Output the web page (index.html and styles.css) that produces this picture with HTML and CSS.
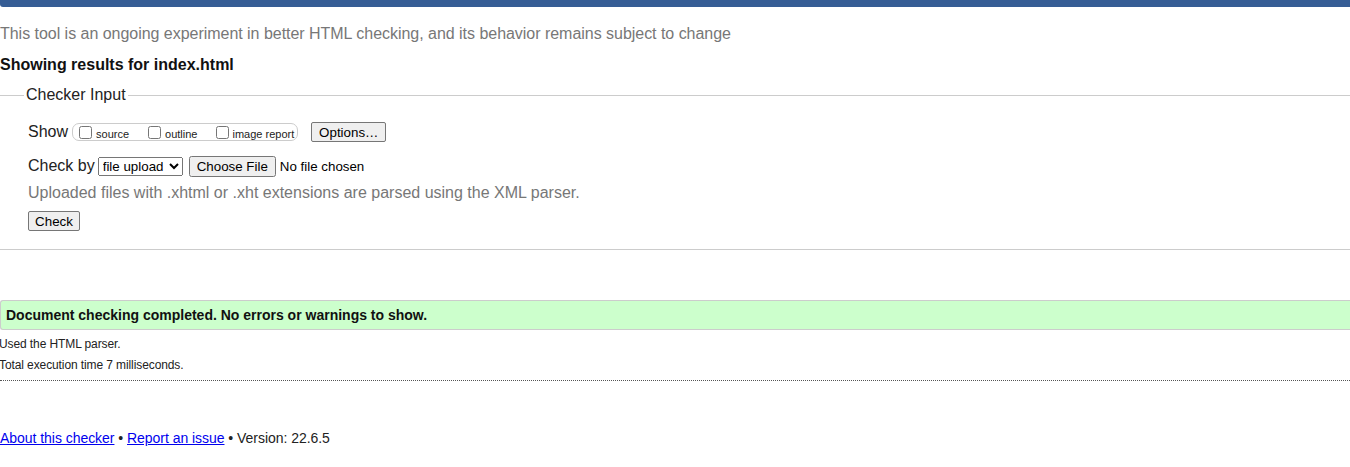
FILE: index.html
```html
<!DOCTYPE html>
<html lang="en">
<head>
<meta charset="utf-8">
<title>Nu Html Checker</title>
<link rel="stylesheet" href="styles.css">
</head>
<body>
<div class="topbar"></div>
<p class="intro">This tool is an ongoing experiment in better HTML checking, and its behavior remains subject to change</p>
<p class="results">Showing results for index.html</p>
<form class="panel">
  <div class="panel-head"><span class="legend">Checker Input</span></div>
  <div class="panel-body">
    <div class="row show-row">
      <span class="label">Show</span>
      <span class="opts">
        <label class="opt"><input type="checkbox"><span>source</span></label>
        <label class="opt"><input type="checkbox"><span>outline</span></label>
        <label class="opt last"><input type="checkbox"><span>image report</span></label>
      </span>
      <button type="button" class="btn options">Options…</button>
    </div>
    <div class="row check-row">
      <span class="label">Check by</span>
      <select class="sel"><option>file upload</option></select>
      <input type="file" class="file">
    </div>
    <p class="hint">Uploaded files with .xhtml or .xht extensions are parsed using the XML parser.</p>
    <button type="button" class="btn check">Check</button>
  </div>
</form>
<p class="success">Document checking completed. No errors or warnings to show.</p>
<p class="details first">Used the HTML parser.</p>
<p class="details second">Total execution time 7 milliseconds.</p>
<hr class="dots">
<p class="footer"><a href="#">About this checker</a> • <a href="#">Report an issue</a> • Version: 22.6.5</p>
</body>
</html>
```
FILE: styles.css
```css
html, body {
  margin: 0;
  background: #fff;
}
body {
  font-family: "Liberation Sans", Arial, sans-serif;
  color: #222;
  font-size: 16px;
}
.topbar {
  height: 7px;
  background: #365d95;
  border-bottom-left-radius: 3px;
}
.intro {
  margin: 17px 0 0;
  line-height: 20px;
  color: #777;
  letter-spacing: -0.03px;
}
.results {
  margin: 11px 0 0;
  line-height: 20px;
  font-weight: bold;
  color: #111;
}
.panel {
  margin: 11px 0 0;
  border-bottom: 1px solid #ccc;
  padding-bottom: 18px;
}
.panel-head {
  display: flex;
  align-items: center;
  height: 18px;
}
.panel-head::before,
.panel-head::after {
  content: "";
  height: 1px;
  background: #ccc;
}
.panel-head::before {
  width: 24px;
}
.panel-head::after {
  flex: 1;
}
.legend {
  padding: 0 2px;
  line-height: 18px;
  color: #222;
}
.panel-body {
  padding: 18px 0 0 28px;
}
.row {
  display: flex;
  align-items: center;
  height: 20px;
}
.label {
  line-height: 20px;
}
.opts {
  display: inline-flex;
  align-items: center;
  height: 16px;
  margin-left: 4px;
  padding: 0 3px 0 6px;
  border: 1px solid #ccc;
  border-radius: 7px;
}
.opt {
  display: inline-flex;
  align-items: center;
  font-size: 11px;
  margin-right: 19px;
}
.opt span {
  padding-top: 3px;
}
.opt.last {
  margin-right: 0;
}
.opt input {
  width: 13px;
  height: 13px;
  margin: 0 4px 0 0;
}
.opt.last input {
  margin-right: 3px;
}
.btn {
  font: 13.33px "Liberation Sans", Arial, sans-serif;
  height: 20px;
  padding: 1px 6px;
  color: #000;
  background: #efefef;
  border: 1px solid #767676;
  border-radius: 2px;
}
.options {
  margin-left: 13px;
  width: 75px;
}
.check-row {
  margin-top: 14px;
}
.sel {
  font: 13.33px "Liberation Sans", Arial, sans-serif;
  margin-left: 3px;
  width: 85px;
  height: 19px;
  color: #000;
}
.file {
  font: 13.33px "Liberation Sans", Arial, sans-serif;
  margin-left: 6px;
  color: #000;
}
.hint {
  margin: 7px 0 0;
  line-height: 20px;
  color: #777;
}
.check {
  margin-top: 8px;
  width: 52px;
}
.success {
  margin: 50px 0 0;
  padding: 6px 5px;
  line-height: 16px;
  font-size: 14px;
  font-weight: bold;
  color: #111;
  background: #ccffcc;
  border-top: 1px solid #ccc;
  border-bottom: 1px solid #ccc;
  border-left: 1px solid #ccc;
  border-radius: 3px 0 0 3px;
}
.details {
  margin: 0 0 0 -1px;
  font-size: 12px;
  line-height: 14px;
  color: #222;
  letter-spacing: -0.1px;
}
.details.first {
  margin-top: 7px;
}
.details.second {
  margin-top: 7px;
}
.dots {
  margin: 8px 0 0;
  border: 0;
  border-top: 1px dotted #555;
  height: 0;
}
.footer {
  margin: 49px 0 0;
  font-size: 14px;
  line-height: 16px;
  color: #222;
  letter-spacing: -0.04px;
}
.footer a {
  color: #0000ee;
}
```
